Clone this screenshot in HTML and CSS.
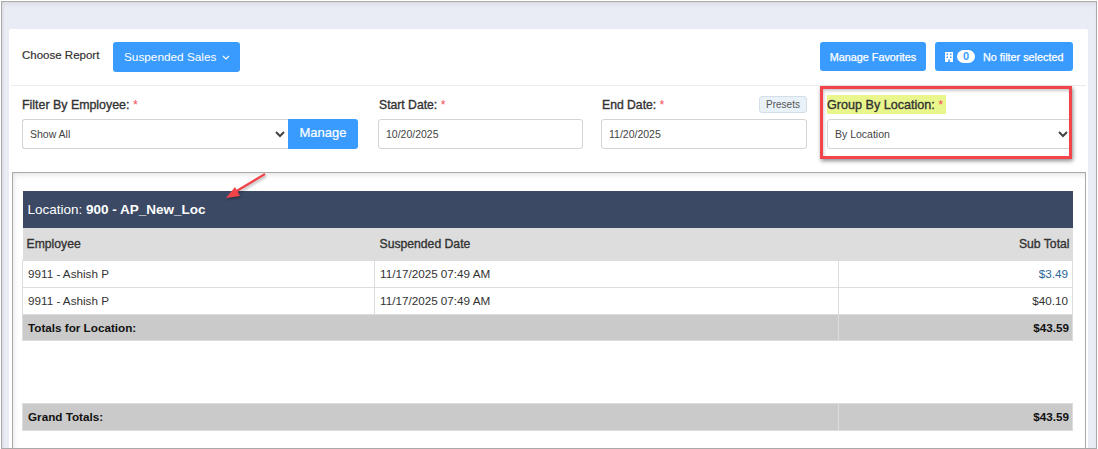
FILE: index.html
```html
<!DOCTYPE html>
<html lang="en">
<head>
<meta charset="utf-8">
<title>Suspended Sales</title>
<link rel="stylesheet" href="styles.css">
</head>
<body>
<div class="frame">
  <div class="card">
    <div class="toolbar">
      <span class="choose">Choose Report</span>
      <button class="btn btn-report">Suspended Sales
        <svg class="chev" width="8" height="5" viewBox="0 0 8 5"><path d="M1 1l3 3 3-3" fill="none" stroke="#fff" stroke-width="1.2"/></svg>
      </button>
      <button class="btn btn-fav">Manage Favorites</button>
      <button class="btn btn-filter">
        <svg class="filter-icon" width="8" height="10" viewBox="0 0 8 10"><path fill="#fff" fill-rule="evenodd" d="M0 0h8v10H0zM1.500 1.500v1.500h1.500V1.500zm3.500 0v1.500h1.500V1.500zM1.500 4.500V6h1.500V4.500zm3.500 0V6h1.500V4.500zM3.200 7.500V10h1.600V7.500z"/></svg>
        <span class="badge">0</span>
        <span class="filter-text">No filter selected</span>
      </button>
    </div>
    <div class="filters">
      <div class="field field-emp">
        <div class="label-row"><label class="label">Filter By Employee: <span class="req">*</span></label></div>
        <div class="joined">
          <select class="control select-emp"><option>Show All</option></select>
          <button class="btn btn-manage">Manage</button>
        </div>
      </div>
      <div class="field field-start">
        <div class="label-row"><label class="label">Start Date: <span class="req">*</span></label></div>
        <input class="control" type="text" value="10/20/2025">
      </div>
      <div class="field field-end">
        <div class="label-row"><label class="label">End Date: <span class="req">*</span></label><span class="presets">Presets</span></div>
        <input class="control" type="text" value="11/20/2025">
      </div>
      <div class="field field-group">
        <div class="label-row"><label class="label label-hl">Group By Location: <span class="req">*</span></label></div>
        <select class="control"><option>By Location</option></select>
      </div>
    </div>
    <div class="report">
      <table class="table">
        <colgroup><col class="c1"><col class="c2"><col class="c3"></colgroup>
        <thead>
          <tr class="loc"><th colspan="3">Location: <b>900 - AP_New_Loc</b></th></tr>
          <tr class="head"><th>Employee</th><th class="head-date">Suspended Date</th><th class="num">Sub Total</th></tr>
        </thead>
        <tbody>
          <tr class="row"><td>9911 - Ashish P</td><td>11/17/2025 07:49 AM</td><td class="num link">$3.49</td></tr>
          <tr class="row"><td>9911 - Ashish P</td><td>11/17/2025 07:49 AM</td><td class="num">$40.10</td></tr>
          <tr class="total"><td colspan="2">Totals for Location:</td><td class="num">$43.59</td></tr>
          <tr class="spacer"><td colspan="3"></td></tr>
          <tr class="total grand"><td colspan="2">Grand Totals:</td><td class="num">$43.59</td></tr>
        </tbody>
      </table>
    </div>
  </div>
  <div class="callout"></div>
  <svg class="arrow" width="50" height="34" viewBox="0 0 50 34"><path d="M42 2L12 20" stroke="#f0444a" stroke-width="2.200" fill="none"/><path d="M3 26L12 15l5 9z" fill="#f0444a"/></svg>
</div>
</body>
</html>
```
FILE: styles.css
```css
* { box-sizing: border-box; }
html, body { margin: 0; padding: 0; background: #fff; }
body { font-family: "Liberation Sans", Arial, sans-serif; color: #333; }
.frame {
  position: relative;
  width: 1096px;
  height: 448px;
  margin: 1px 0 0 1px;
  padding: 27px 8px 0 7px;
  overflow: hidden;
  background: #e9ebf5;
  border: 1px solid #a9a9a9;
  box-shadow: inset 0 4px 4px -2px #d8d9e0, inset 3px 0 3px -2px #d8d9e0;
}
.card { background: #fff; height: 420px; display: flex; flex-direction: column; border-radius: 2px 2px 0 0; }
.toolbar {
  display: flex;
  align-items: flex-start;
  height: 57px;
  margin: 0 2px;
  padding: 13px 13px 0 11px;
  border-bottom: 1px solid #ececec;
}
.choose { font-size: 11.500px; line-height: 13px; margin-top: 7px; margin-right: 14px; color: #333; -webkit-text-stroke: .2px #333; }
.btn {
  border: 0;
  border-radius: 3px;
  background: #3a9bff;
  color: #fff;
  font-family: inherit;
  padding: 0;
  cursor: pointer;
}
.btn-report { width: 127px; height: 30px; font-size: 11.800px; }
.chev { margin-left: 2px; vertical-align: 1px; }
.btn-fav { margin-left: auto; width: 106px; height: 29px; font-size: 10.800px; font-weight: 400; -webkit-text-stroke: .25px #fff; }
.btn-filter { margin-left: 9px; width: 138px; height: 29px; font-size: 10.800px; display: flex; align-items: center; padding-left: 10px; -webkit-text-stroke: .25px #fff; }
.badge { width: 18px; height: 13px; border-radius: 7px; background: #fff; color: #3a9bff; font-size: 11px; line-height: 13px; margin-left: 4px; font-weight: 700; text-align: center; -webkit-text-stroke: 0; }
.filter-text { margin-left: 8px; }
.filters { display: flex; height: 86px; padding: 0 0 0 13px; }
.field { display: flex; flex-direction: column; }
.field-emp { width: 336px; margin-right: 20px; }
.field-start { width: 205px; margin-right: 18px; }
.field-end { width: 206px; margin-right: 20px; }
.field-group { width: 245px; }
.label-row { display: flex; justify-content: space-between; align-items: flex-start; height: 33px; padding-top: 10px; }
.label { font-size: 12.400px; line-height: 18px; font-weight: 400; color: #333; -webkit-text-stroke: .35px #333; }
.field-start .label, .field-end .label { margin-left: 1px; font-size: 12.200px; }
.label-hl { background: #e9f68c; height: 19px; margin-top: -1px; padding: 1px 3px 0 0; font-size: 12.600px; }
.req { color: #f4505f; -webkit-text-stroke: 0; }
.presets {
  width: 48px; height: 17px;
  font-size: 10px; line-height: 15px; text-align: center; color: #555;
  background: #e9f1f9; border: 1px solid #d5dde6; border-radius: 3px;
}
.control {
  width: 100%;
  height: 30px;
  font-family: inherit;
  font-size: 10.500px;
  color: #444;
  background: #fff;
  border: 1px solid #d4d4d4;
  border-radius: 3px;
  padding: 0 7px;
  outline: 0;
}
select.control { padding: 0 3px; }
.joined { display: flex; }
.select-emp { width: 266px; border-radius: 3px 0 0 3px; border-right: 0; }
.btn-manage { width: 70px; height: 30px; font-size: 13px; padding-bottom: 3px; border-radius: 0 3px 3px 0; -webkit-text-stroke: .2px #fff; }
.report {
  flex: 1;
  margin: 0 2px 0 3px;
  padding: 18px 10px 0 9px;
  border: 1px solid #a9a9a9;
  border-bottom: 0;
  box-shadow: inset 0 6px 6px -5px #ddd, inset 6px 0 6px -6px #ddd;
}
.table { width: 1050px; border-collapse: collapse; table-layout: fixed; font-size: 11.700px; color: #333; }
.c1 { width: 352px; }
.c2 { width: 464px; }
.c3 { width: 234px; }
.loc th { height: 37px; padding: 0 6px 1px 5px; background: #3b4964; color: #fff; font-size: 13.500px; font-weight: 400; text-align: left; }
.head th { height: 32px; padding: 1px 4px 0; background: #dddddd; font-size: 12.200px; font-weight: 400; text-align: left; color: #333; -webkit-text-stroke: .35px #333; }
.head .head-date { padding-left: 5px; }
.row td { height: 27px; padding: 0 5px; border: 1px solid #dddddd; }
.total td { height: 26px; padding: 0 5px; background: #cacaca; border: 1px solid #dddddd; font-weight: 700; color: #111; }
.grand td { height: 27px; }
.spacer td { height: 63px; padding: 0; }
.table .num { text-align: right; padding-right: 4px; }
.table .head .num, .table .total .num { padding-right: 3px; }
.link { color: #2a6496; }
.callout {
  position: absolute;
  left: 818px; top: 84px;
  width: 252px; height: 73px;
  border: 3px solid #f2444a;
  box-shadow: 1px 2px 4px rgba(0,0,0,.45), inset 1px 2px 3px rgba(0,0,0,.2);
  pointer-events: none;
}
.arrow { position: absolute; left: 221px; top: 170px; pointer-events: none; filter: drop-shadow(1px 2px 1px rgba(0,0,0,.25)); }
```
